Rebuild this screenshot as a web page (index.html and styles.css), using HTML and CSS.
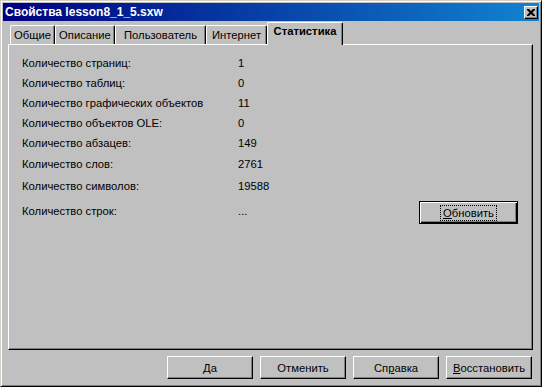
FILE: index.html
```html
<!DOCTYPE html>
<html lang="ru">
<head>
    <meta charset="UTF-8">
    <title>Свойства lesson8_1_5.sxw</title>
    <link rel="stylesheet" href="styles.css">
</head>
<body>
    <div class="window">
        <div class="titlebar">
            <span class="title">Свойства lesson8_1_5.sxw</span>
            <button class="close">
                <svg width="8" height="7" viewBox="0 0 8 7">
                    <path d="M0 0h2l2 2 2-2h2v1l-2.5 2.5 2.5 2.5v1h-2l-2-2-2 2h-2v-1l2.5-2.5-2.5-2.5z" fill="#000"/>
                </svg>
            </button>
        </div>
        <div class="content">
            <div class="tabs">
                <div class="tab tab-general">Общие</div>
                <div class="tab tab-desc">Описание</div>
                <div class="tab tab-user">Пользователь</div>
                <div class="tab tab-web">Интернет</div>
                <div class="tab tab-stats active">Статистика</div>
            </div>
            <div class="panel">
                <div class="stats">
                    <div class="label">Количество страниц:</div><div class="value">1</div>
                    <div class="label">Количество таблиц:</div><div class="value">0</div>
                    <div class="label">Количество графических объектов</div><div class="value">11</div>
                    <div class="label">Количество объектов OLE:</div><div class="value">0</div>
                    <div class="label">Количество абзацев:</div><div class="value">149</div>
                    <div class="label">Количество слов:</div><div class="value">2761</div>
                    <div class="label">Количество символов:</div><div class="value">19588</div>
                    <div class="label">Количество строк:</div><div class="value last">...</div>
                    <button class="btn default refresh"><span class="focus"><u>О</u>бновить</span></button>
                </div>
            </div>
            <div class="actions">
                <button class="btn">Да</button>
                <button class="btn">Отменить</button>
                <button class="btn">Сп<u>р</u>авка</button>
                <button class="btn"><u>В</u>осстановить</button>
            </div>
        </div>
    </div>
</body>
</html>
```

FILE: styles.css
```css
* {
    box-sizing: border-box;
    margin: 0;
    padding: 0;
}

body {
    width: 542px;
    height: 387px;
    background-color: #c0c0c0;
    font-family: "Liberation Sans", Arial, sans-serif;
    font-size: 11.25px;
    color: #000;
}

.window {
    width: 542px;
    height: 387px;
    padding: 2px;
    background-color: #c0c0c0;
    border: 1px solid;
    border-color: #d4d0c8 #000 #000 #d4d0c8;
    box-shadow: inset 1px 1px #fff, inset -1px -1px #808080;
    display: flex;
    flex-direction: column;
}

.titlebar {
    height: 18px;
    margin-bottom: 1px;
    background: linear-gradient(to right, #000080, #1084d0);
    display: flex;
    align-items: center;
    justify-content: space-between;
    padding: 0 1px 0 2px;
}

.title {
    color: #fff;
    font-weight: bold;
    font-size: 12px;
    white-space: nowrap;
}

.close {
    width: 14px;
    height: 13px;
    background-color: #c0c0c0;
    border: 1px solid;
    border-color: #fff #000 #000 #fff;
    box-shadow: inset -1px -1px #808080;
    display: flex;
    align-items: center;
    justify-content: center;
}

.content {
    flex: 1;
    display: flex;
    flex-direction: column;
    padding: 0 6px 5px 5px;
}

.tabs {
    height: 22px;
    display: flex;
    align-items: flex-end;
    padding-left: 2px;
}

.tab {
    height: 19px;
    padding-top: 3px;
    text-align: center;
    border: 1px solid;
    border-bottom: none;
    border-color: #fff #000 transparent #fff;
    border-radius: 2px 2px 0 0;
    box-shadow: inset -1px 0 #808080;
    white-space: nowrap;
}

.tab-general { width: 45px; }
.tab-desc { width: 60px; }
.tab-user { width: 91px; }
.tab-web { width: 61px; }

.tab.active {
    width: 76px;
    height: 23px;
    margin-bottom: -1px;
    padding-top: 2px;
    font-weight: bold;
    background-color: #c0c0c0;
    position: relative;
    z-index: 1;
}

.panel {
    height: 306px;
    border: 1px solid;
    border-color: #fff #000 #000 #fff;
    box-shadow: inset -1px -1px #808080;
    padding: 8px 14px 0 13px;
}

.stats {
    display: grid;
    grid-template-columns: 216px 1fr auto;
    grid-template-rows: 20px 20px 20px 20px 20px 22px 22px 27px;
    align-items: center;
}

.value {
    grid-column: 2 / 4;
}

.value.last {
    grid-column: 2;
}

.btn {
    width: 86px;
    height: 23px;
    font-family: inherit;
    font-size: 11.25px;
    color: #000;
    background-color: #c0c0c0;
    border: 1px solid;
    border-color: #fff #000 #000 #fff;
    box-shadow: inset -1px -1px #808080;
}

.btn.default {
    border: 1px solid #000;
    box-shadow: inset 1px 1px #fff, inset -1px -1px #000, inset -2px -2px #808080;
}

.refresh {
    width: 99px;
    justify-self: end;
    align-self: end;
}

.focus {
    display: inline-block;
    padding: 1px 2px;
    border: 1px dotted #000;
}

.actions {
    display: flex;
    justify-content: flex-end;
    gap: 7px;
    margin-top: 6px;
    padding-right: 1px;
}
```
